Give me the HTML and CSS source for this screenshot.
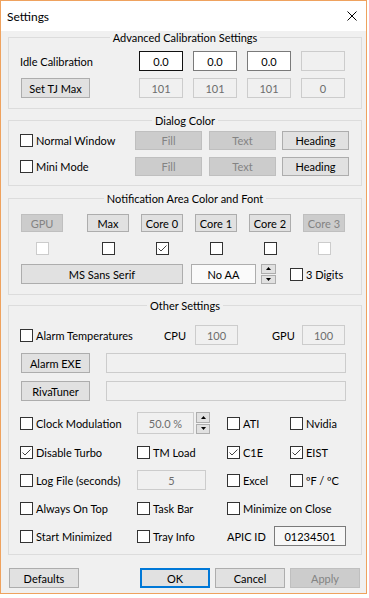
FILE: index.html
```html
<!DOCTYPE html>
<html lang="en">
<head>
  <meta charset="UTF-8">
  <title>Settings</title>
  <link rel="stylesheet" href="styles.css">
</head>
<body>
  <div class="window">
    <!-- Title bar -->
    <div class="titlebar">
      <span class="title">Settings</span>
      <svg class="close" viewBox="0 0 10 10"><path d="M0.5 0.5 L9.5 9.5 M9.5 0.5 L0.5 9.5" /></svg>
    </div>

    <div class="content">
      <!-- Advanced Calibration -->
      <fieldset class="group calib">
        <legend>Advanced Calibration Settings</legend>
        <div class="calib-row">
          <span>Idle Calibration</span>
          <span class="edit hot">0.0</span>
          <span class="edit">0.0</span>
          <span class="edit">0.0</span>
          <span class="edit off"></span>
        </div>
        <div class="calib-row">
          <button class="btn tj">Set TJ Max</button>
          <span class="edit off">101</span>
          <span class="edit off">101</span>
          <span class="edit off">101</span>
          <span class="edit off">0</span>
        </div>
      </fieldset>

      <!-- Dialog Color -->
      <fieldset class="group dialog">
        <legend>Dialog Color</legend>
        <div class="dialog-row">
          <label class="opt"><span class="check"></span>Normal Window</label>
          <button class="btn off">Fill</button>
          <button class="btn off">Text</button>
          <button class="btn">Heading</button>
        </div>
        <div class="dialog-row">
          <label class="opt"><span class="check"></span>Mini Mode</label>
          <button class="btn off">Fill</button>
          <button class="btn off">Text</button>
          <button class="btn">Heading</button>
        </div>
      </fieldset>

      <!-- Notification Area -->
      <fieldset class="group notify">
        <legend>Notification Area Color and Font</legend>
        <div class="core-row">
          <button class="btn off">GPU</button>
          <button class="btn">Max</button>
          <button class="btn">Core 0</button>
          <button class="btn">Core 1</button>
          <button class="btn">Core 2</button>
          <button class="btn off">Core 3</button>
        </div>
        <div class="core-row checks">
          <span class="cell"><span class="check off"></span></span>
          <span class="cell"><span class="check"></span></span>
          <span class="cell"><span class="check on"><svg viewBox="0 0 11 11"><path d="M1.5 5.5 L4 8 L9.5 2.5" /></svg></span></span>
          <span class="cell"><span class="check"></span></span>
          <span class="cell"><span class="check"></span></span>
          <span class="cell"><span class="check off"></span></span>
        </div>
        <div class="font-row">
          <button class="btn font">MS Sans Serif</button>
          <span class="edit aa">No AA</span>
          <span class="spin">
            <span class="spin-up"><svg viewBox="0 0 5 3"><path d="M2.5 0 L5 3 L0 3 Z" /></svg></span>
            <span class="spin-down"><svg viewBox="0 0 5 3"><path d="M0 0 L5 0 L2.5 3 Z" /></svg></span>
          </span>
          <label class="opt digits"><span class="check"></span>3 Digits</label>
        </div>
      </fieldset>

      <!-- Other Settings -->
      <fieldset class="group other">
        <legend>Other Settings</legend>
        <div class="alarm-row">
          <label class="opt"><span class="check"></span>Alarm Temperatures</label>
          <span>CPU</span>
          <span class="edit off">100</span>
          <span>GPU</span>
          <span class="edit off">100</span>
        </div>
        <div class="path-row">
          <button class="btn">Alarm EXE</button>
          <span class="edit off"></span>
        </div>
        <div class="path-row">
          <button class="btn">RivaTuner</button>
          <span class="edit off"></span>
        </div>
        <div class="opt-row clock">
          <label class="opt"><span class="check"></span>Clock Modulation</label>
          <span class="clock-box">
            <span class="edit off">50.0 %</span>
            <span class="spin">
              <span class="spin-up"><svg viewBox="0 0 5 3"><path d="M2.5 0 L5 3 L0 3 Z" /></svg></span>
              <span class="spin-down"><svg viewBox="0 0 5 3"><path d="M0 0 L5 0 L2.5 3 Z" /></svg></span>
            </span>
          </span>
          <label class="opt"><span class="check"></span>ATI</label>
          <label class="opt"><span class="check"></span>Nvidia</label>
        </div>
        <div class="opt-row">
          <label class="opt"><span class="check on"><svg viewBox="0 0 11 11"><path d="M1.5 5.5 L4 8 L9.5 2.5" /></svg></span>Disable Turbo</label>
          <label class="opt"><span class="check"></span>TM Load</label>
          <label class="opt"><span class="check on"><svg viewBox="0 0 11 11"><path d="M1.5 5.5 L4 8 L9.5 2.5" /></svg></span>C1E</label>
          <label class="opt"><span class="check on"><svg viewBox="0 0 11 11"><path d="M1.5 5.5 L4 8 L9.5 2.5" /></svg></span>EIST</label>
        </div>
        <div class="opt-row">
          <label class="opt"><span class="check"></span>Log File (seconds)</label>
          <span class="edit off log">5</span>
          <label class="opt"><span class="check"></span>Excel</label>
          <label class="opt"><span class="check"></span>ºF / ºC</label>
        </div>
        <div class="opt-row">
          <label class="opt"><span class="check"></span>Always On Top</label>
          <label class="opt"><span class="check"></span>Task Bar</label>
          <label class="opt wide"><span class="check"></span>Minimize on Close</label>
        </div>
        <div class="opt-row apic-row">
          <label class="opt"><span class="check"></span>Start Minimized</label>
          <label class="opt"><span class="check"></span>Tray Info</label>
          <span>APIC ID</span>
          <span class="edit apic">01234501</span>
        </div>
      </fieldset>

      <!-- Dialog buttons -->
      <div class="actions">
        <button class="btn">Defaults</button>
        <span class="spacer"></span>
        <button class="btn default">OK</button>
        <button class="btn">Cancel</button>
        <button class="btn off">Apply</button>
      </div>
    </div>
  </div>
</body>
</html>
```

FILE: styles.css
```css
* {
  box-sizing: border-box;
}
html, body {
  margin: 0;
  padding: 0;
}
body {
  background: #fff;
  font-family: Lato, 'Segoe UI', sans-serif;
  font-size: 11px;
  color: #000;
}
/* Window frame */
.window {
  width: 367px;
  height: 594px;
  border: 1px solid #efa25e;
  background: #f0f0f0;
}
.titlebar {
  height: 30px;
  background: #fff;
  display: flex;
  align-items: center;
  justify-content: space-between;
  padding: 0 9px 0 6px;
}
.title {
  font-size: 12px;
}
.close {
  width: 10px;
  height: 10px;
}
.close path {
  stroke: #000;
  stroke-width: 1;
  fill: none;
}
.content {
  padding: 0 4px 6px 7px;
}
/* Group boxes */
.group {
  width: 354px;
  margin: 0;
  min-width: 0;
  border: 1px solid #dcdcdc;
  padding: 7px 11px 10px 11px;
  display: flex;
  flex-direction: column;
}
.group legend {
  margin: 0 auto;
  padding: 0 3px;
  line-height: 13px;
}
.calib {
  gap: 7px;
}
.dialog {
  margin-top: 5px;
  padding-top: 4px;
  padding-bottom: 9px;
  gap: 7px;
}
.notify {
  margin-top: 6px;
  padding-top: 9px;
}
.other {
  margin-top: 4px;
  padding-top: 13px;
  padding-bottom: 8px;
  gap: 8px;
}
/* Controls */
.btn {
  height: 20px;
  padding: 0;
  border: 1px solid #adadad;
  background: #e1e1e1;
  font: inherit;
  color: #000;
  display: flex;
  align-items: center;
  justify-content: center;
}
.btn.off {
  background: #cccccc;
  border-color: #bfbfbf;
  color: #838383;
}
.btn.default {
  border: 2px solid #0078d7;
}
.edit {
  height: 20px;
  border: 1px solid #7a7a7a;
  background: #fff;
  display: flex;
  align-items: center;
  justify-content: center;
}
.edit.hot {
  border-color: #111;
}
.edit.off {
  border-color: #cccccc;
  background: #f0f0f0;
  color: #6d6d6d;
}
.check {
  width: 13px;
  height: 13px;
  flex: none;
  border: 1px solid #333;
  background: #fff;
  display: flex;
  align-items: center;
  justify-content: center;
}
.check.off {
  border-color: #cccccc;
}
.check svg {
  width: 11px;
  height: 11px;
}
.check path {
  fill: none;
  stroke: #444;
  stroke-width: 1;
}
.opt {
  display: flex;
  align-items: center;
  gap: 3px;
  white-space: nowrap;
}
.spin {
  width: 15px;
  display: flex;
  flex-direction: column;
}
.spin > span {
  flex: 1;
  border: 1px solid #adadad;
  background: #e1e1e1;
  display: flex;
  align-items: center;
  justify-content: center;
}
.spin-down {
  margin-top: 1px;
}
.spin svg {
  width: 5px;
  height: 3px;
}
.spin path {
  fill: #000;
}
/* Rows */
.calib-row {
  display: grid;
  grid-template-columns: 109px repeat(4, 44px);
  column-gap: 10px;
  align-items: center;
}
.calib-row .tj {
  width: 69px;
  margin-left: 1px;
}
.dialog-row {
  display: grid;
  grid-template-columns: 115px 74px 73px 67px;
  align-items: center;
}
.dialog-row .btn {
  width: 67px;
  height: 19px;
}
.core-row {
  display: grid;
  grid-template-columns: 66px repeat(4, 54px) 42px;
  margin-left: 1px;
}
.core-row .btn {
  width: 42px;
  height: 18px;
}
.core-row.checks {
  margin-top: 10px;
}
.cell {
  width: 42px;
  display: flex;
  justify-content: center;
}
.font-row {
  display: flex;
  align-items: center;
  margin-top: 9px;
  margin-left: 1px;
}
.font-row .font {
  width: 162px;
}
.font-row .aa {
  width: 65px;
  margin-left: 8px;
  border-color: #adadad;
  background: #fafafa;
}
.font-row .spin {
  height: 20px;
  margin-left: 5px;
}
.font-row .digits {
  margin-left: 14px;
}
.alarm-row {
  display: grid;
  grid-template-columns: 144px 31px 77px 30px 44px;
  align-items: center;
}
.alarm-row .edit {
  width: 43px;
}
.path-row {
  display: grid;
  grid-template-columns: 86px 240px;
  align-items: center;
}
.path-row .btn {
  width: 69px;
  margin-left: 1px;
}
.opt-row {
  display: grid;
  grid-template-columns: 117px 90px 63px 1fr;
  align-items: center;
  height: 20px;
}
.opt-row.clock {
  height: 22px;
  margin-top: 3px;
}
.clock-box {
  display: flex;
  gap: 2px;
  height: 22px;
}
.clock-box .edit {
  width: 57px;
  height: 22px;
}
.clock-box .spin {
  width: 14px;
}
.log {
  width: 69px;
}
.wide {
  grid-column: span 2;
}
.apic-row {
  grid-template-columns: 117px 90px 47px 72px;
}
.apic {
  background: #f7f7f7;
}
.actions {
  display: flex;
  gap: 5px;
  margin-top: 13px;
  padding-left: 1px;
}
.actions .btn {
  width: 70px;
}
.actions .spacer {
  width: 51px;
}
```
